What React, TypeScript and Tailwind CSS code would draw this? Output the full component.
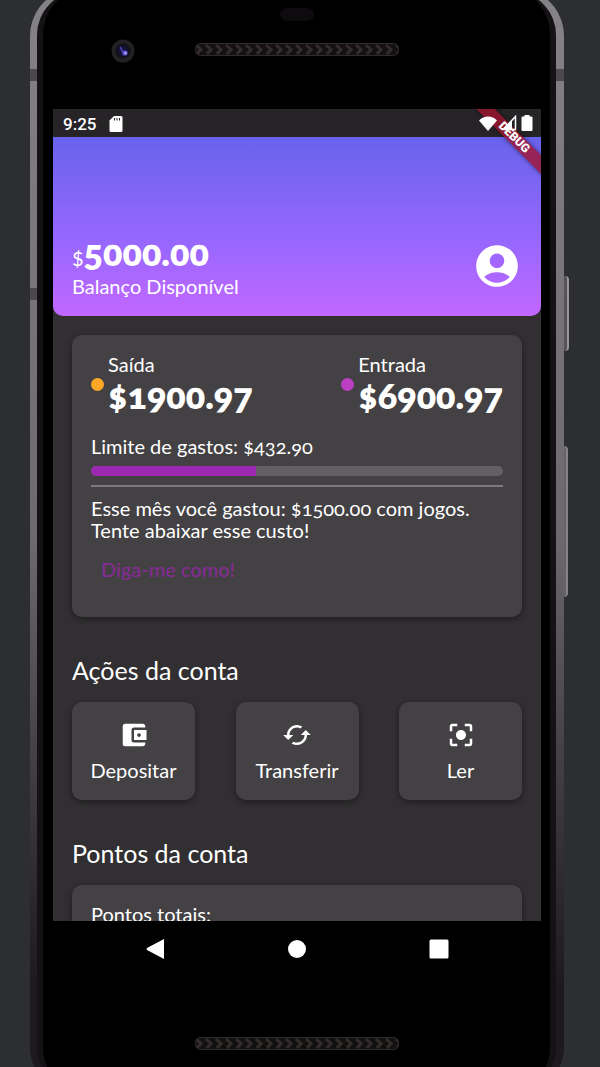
import type { ReactNode } from "react";
import {
  MdAccountBalanceWallet,
  MdAccountCircle,
  MdCached,
  MdCenterFocusStrong,
} from "react-icons/md";

function Speaker({ id }: { id: string }) {
  return (
    <svg className="h-[13px] w-[204px]" viewBox="0 0 204 13" aria-hidden="true">
      <defs>
        <pattern id={id} width="10" height="13" patternUnits="userSpaceOnUse">
          <rect width="10" height="13" fill="#121011" />
          <path d="M1 2l5 4.500-4 4.500" stroke="#332c2b" strokeWidth="3" fill="none" />
        </pattern>
      </defs>
      <rect x="0.500" y="0.500" width="203" height="12" rx="5" fill={`url(#${id})`} stroke="#2f2c2d" />
    </svg>
  );
}

function Camera() {
  return (
    <svg className="size-6" viewBox="0 0 24 24" aria-hidden="true">
      <circle cx="12" cy="12" r="11.500" fill="#232123" />
      <circle cx="12" cy="12" r="7.500" fill="#121018" />
      <circle cx="12" cy="12" r="5" fill="#15123a" />
      <path d="M9 8l3 5" stroke="#4a45b8" strokeWidth="1.500" />
      <circle cx="14" cy="14" r="2.600" fill="#5b55d6" />
      <circle cx="14.500" cy="14" r="1.200" fill="#aaa6f5" />
    </svg>
  );
}

function StatusBar() {
  return (
    <div className="flex h-7 shrink-0 items-center justify-between bg-[#262427] pr-2 pl-[10px] text-white">
      <div className="flex items-center gap-[13px] pt-[2px]">
        <span className="font-[Roboto,sans-serif] text-[17px] leading-6 font-medium">9:25</span>
        <svg className="h-4 w-[14px]" viewBox="0 0 14 16" fill="currentColor" aria-hidden="true">
          <path d="M5 0h7a1.500 1.500 0 0 1 1.500 1.500v13a1.500 1.500 0 0 1-1.500 1.500H2a1.500 1.500 0 0 1-1.500-1.500V4.500z" />
          <path d="M5.500 2v2.500M8 2v2.500M10.500 2v2.500" stroke="#262427" strokeWidth="1" />
        </svg>
      </div>
      <div className="relative z-10 flex items-center gap-1">
        <svg className="h-[15px] w-[18px]" viewBox="0 0 18 15" fill="currentColor" aria-hidden="true">
          <path d="M0 4.500C5 -1 13 -1 18 4.500L9 15z" />
        </svg>
        <svg className="size-4" viewBox="0 0 16 16" aria-hidden="true">
          <path d="M2 14.500L14.500 1.500v13z" fill="none" stroke="currentColor" strokeWidth="1.500" />
          <path d="M2 15L11 5.500v9.500z" fill="currentColor" />
        </svg>
        <svg className="h-4 w-[12px]" viewBox="0 0 12 16" fill="currentColor" aria-hidden="true">
          <path d="M3.500 0h5v1.500H10.500a1 1 0 0 1 1 1V15a1 1 0 0 1-1 1h-9a1 1 0 0 1-1-1V2.500a1 1 0 0 1 1-1h2z" />
        </svg>
      </div>
    </div>
  );
}

function Amount({ label, value, dot }: { label: string; value: string; dot: string }) {
  return (
    <div className="flex gap-1">
      <span className={`mt-[26px] size-[13px] shrink-0 rounded-full ${dot}`} />
      <div>
        <p className="text-xl leading-6">{label}</p>
        <p className="text-4xl leading-[38px] font-extrabold oldstyle-nums">{value}</p>
      </div>
    </div>
  );
}

function Action({ icon, label }: { icon: ReactNode; label: string }) {
  return (
    <button
      type="button"
      className="flex w-[123px] flex-col items-center gap-2 rounded-[10px] bg-[#434143] pt-[18px] pb-[18px] text-xl leading-6 shadow-[0_2px_6px_rgba(0,0,0,0.4)]"
    >
      {icon}
      {label}
    </button>
  );
}

export default function App() {
  return (
    <main className="flex h-screen flex-col overflow-hidden bg-[#2c2e31] pr-9 pl-[30px] font-[Lato,sans-serif] text-white">
      <div className="relative -mt-3 -mb-7 flex min-h-0 flex-1 flex-col rounded-[48px] bg-linear-to-b from-[#858385] via-[#6b696c] via-50% to-[#1c1a1c] to-90% pr-2 pl-[7px]">
        <span className="absolute top-[81px] left-0 h-3 w-full bg-[#4b494b]" />
        <span className="absolute top-[300px] left-0 h-3 w-2 bg-[#4b494b]" />
        <span className="absolute top-[288px] -right-[5px] h-[75px] w-[5px] rounded-r-sm border-r-2 border-[#999799] bg-[#555355]" />
        <span className="absolute top-[458px] -right-[4px] h-[151px] w-[4px] rounded-r-sm border-r-2 border-[#858385] bg-[#656365]" />
        <div className="relative mt-[3px] mb-1 flex min-h-0 flex-1 flex-col rounded-[44px] border-x-6 border-[#141214] bg-black pr-[9px] pl-[10px]">
          <div className="flex h-[118px] shrink-0 flex-col items-center pt-[17px]">
            <span className="h-[13px] w-[34px] rounded-full bg-[#0d0b0d]" />
            <div className="mt-[14px] grid w-full grid-cols-[1fr_auto_1fr] items-center">
              <div className="pt-1 pl-[58px]">
                <Camera />
              </div>
              <Speaker id="top-speaker" />
            </div>
          </div>

          <div className="relative flex min-h-0 flex-1 flex-col overflow-hidden bg-[#312f31]">
            <StatusBar />
            <header className="flex h-[179px] shrink-0 items-end justify-between rounded-b-[10px] bg-linear-to-b from-[#6863ec] via-[#9867ff] via-60% to-[#c267ff] px-[19px] pb-[18px]">
              <div>
                <p className="text-xl leading-8">
                  $<strong className="text-4xl leading-8 font-extrabold oldstyle-nums">5000.00</strong>
                </p>
                <p className="text-xl leading-6">Balanço Disponível</p>
              </div>
              <button type="button" aria-label="Conta" className="mb-[7px]">
                <MdAccountCircle className="size-[50px]" />
              </button>
            </header>

            <div className="px-[19px] pt-[19px]">
              <section className="rounded-[10px] bg-[#434143] px-[19px] pt-[17px] pb-9 shadow-[0_2px_6px_rgba(0,0,0,0.4)]">
                <div className="flex justify-between">
                  <Amount label="Saída" value="$1900.97" dot="bg-[#ffa726]" />
                  <Amount label="Entrada" value="$6900.97" dot="bg-[#bd40c4]" />
                </div>
                <p className="mt-5 text-xl leading-6 oldstyle-nums">Limite de gastos: $432.90</p>
                <div className="mt-2 h-[10px] overflow-hidden rounded-full bg-[#626062]">
                  <div className="h-full w-2/5 bg-[#9c27b0]" />
                </div>
                <hr className="mt-[9px] border-t-2 border-[#7c7a7c]" />
                <p className="mt-[10px] text-xl leading-[22px] oldstyle-nums">
                  Esse mês você gastou: $1500.00 com jogos. Tente abaixar esse custo!
                </p>
                <button type="button" className="mt-4 block px-[10px] text-xl leading-6 font-medium text-[#852c94]">
                  Diga-me como!
                </button>
              </section>

              <h2 className="mt-[38px] text-[25px] leading-[30px]">Ações da conta</h2>
              <div className="mt-[17px] flex justify-between">
                <Action icon={<MdAccountBalanceWallet className="size-[30px]" />} label="Depositar" />
                <Action icon={<MdCached className="size-[30px]" />} label="Transferir" />
                <Action icon={<MdCenterFocusStrong className="size-[30px]" />} label="Ler" />
              </div>

              <h2 className="mt-[38px] text-[25px] leading-[30px]">Pontos da conta</h2>
              <section className="mt-[17px] rounded-[10px] bg-[#434143] px-[19px] pt-[17px] pb-9 shadow-[0_2px_6px_rgba(0,0,0,0.4)]">
                <p className="text-xl leading-6">Pontos totais:</p>
              </section>
            </div>

            <span className="absolute top-[22px] -right-[21px] w-24 rotate-45 bg-[#a01430]/80 text-center font-[Roboto,sans-serif] text-[12px] leading-[13px] font-black shadow-[0_0_5px_rgba(0,0,0,0.5)]">
              DEBUG
            </span>
          </div>

          <nav className="flex h-[170px] shrink-0 flex-col items-center pt-[18px]">
            <div className="flex w-full justify-between px-[92px]">
              <button type="button" aria-label="Voltar">
                <svg className="size-5" viewBox="0 0 20 20" fill="currentColor">
                  <path d="M19 0v20L2 11q-1-1 0-2z" />
                </svg>
              </button>
              <button type="button" aria-label="Início">
                <svg className="size-5" viewBox="0 0 20 20" fill="currentColor">
                  <circle cx="10" cy="10" r="9" />
                </svg>
              </button>
              <button type="button" aria-label="Recentes">
                <svg className="size-5" viewBox="0 0 20 20" fill="currentColor">
                  <rect x="0.500" y="0.500" width="19" height="19" rx="1.500" />
                </svg>
              </button>
            </div>
            <div className="mt-[78px]">
              <Speaker id="bottom-speaker" />
            </div>
          </nav>
        </div>
      </div>
    </main>
  );
}
